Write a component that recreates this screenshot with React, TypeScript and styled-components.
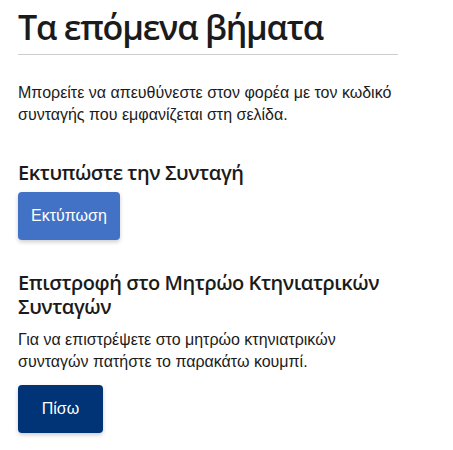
import React from "react";
import styled, { createGlobalStyle } from "styled-components";

const Global = createGlobalStyle`
  html, body { margin: 0; padding: 0; background: #ffffff; }
  body { font-family: "Liberation Sans", Arial, sans-serif; color: #1b1b1b; }
`;

const Page = styled.main`
  padding: 7px 18px 16px 18px;
  width: 380px;
`;

const Title = styled.h1`
  font-family: "Open Sans", "Noto Sans", sans-serif;
  font-weight: 600;
  font-size: 34px;
  line-height: 40px;
  letter-spacing: -1.2px;
  margin: 0;
  padding-bottom: 7px;
  border-bottom: 1px solid #cccccc;
  color: #1b1b1b;
`;

const Text = styled.p<{ $top: number }>`
  font-size: 16px;
  line-height: 22.4px;
  margin: ${(p) => p.$top}px 0 0 0;
  color: #1b1b1b;
`;

const SubTitle = styled.h2<{ $top: number }>`
  font-family: "Open Sans", "Noto Sans", sans-serif;
  font-weight: 600;
  font-size: 20px;
  line-height: 24px;
  letter-spacing: -0.45px;
  margin: ${(p) => p.$top}px 0 0 0;
  color: #1b1b1b;
`;

const Button = styled.button<{ $variant: "print" | "back"; $top: number }>`
  display: block;
  height: 48px;
  min-width: 85px;
  margin-top: ${(p) => p.$top}px;
  padding: 0 13px;
  border: none;
  border-radius: 4px;
  font-family: "Liberation Sans", Arial, sans-serif;
  font-size: 16px;
  text-align: center;
  color: #ffffff;
  background: ${(p) => (p.$variant === "print" ? "#4272c6" : "#003476")};
  box-shadow: 0 2px 4px rgba(0, 0, 0, 0.2);
  cursor: pointer;
`;

export default function App() {
  return (
    <>
      <Global />
      <Page>
        <Title>Τα επόμενα βήματα</Title>
        <Text $top={27}>
          Μπορείτε να απευθύνεστε στον φορέα με τον κωδικό συνταγής που εμφανίζεται στη σελίδα.
        </Text>
        <SubTitle $top={34}>Εκτυπώστε την Συνταγή</SubTitle>
        <Button $variant="print" $top={7}>Εκτύπωση</Button>
        <SubTitle $top={31}>Επιστροφή στο Μητρώο Κτηνιατρικών Συνταγών</SubTitle>
        <Text $top={10}>
          Για να επιστρέψετε στο μητρώο κτηνιατρικών συνταγών πατήστε το παρακάτω κουμπί.
        </Text>
        <Button $variant="back" $top={11}>Πίσω</Button>
      </Page>
    </>
  );
}
